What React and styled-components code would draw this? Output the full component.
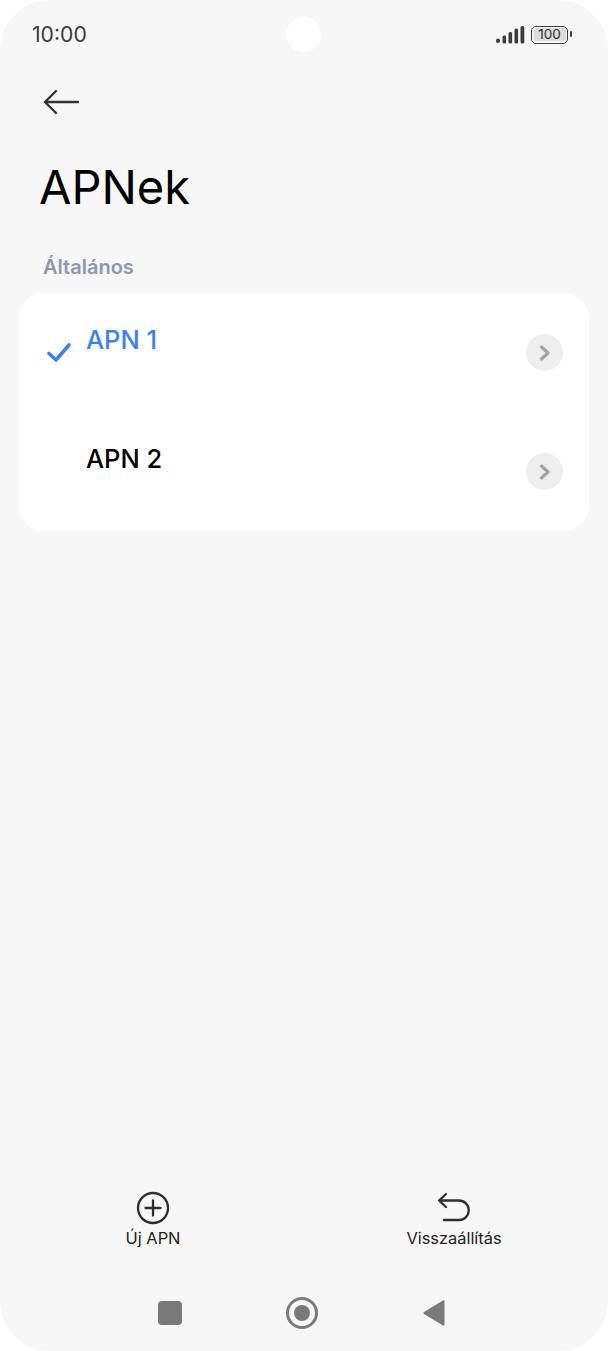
import React from 'react'
import styled, { createGlobalStyle } from 'styled-components'

const GlobalStyle = createGlobalStyle`
  html, body {
    margin: 0;
    background: #fff;
  }
  * {
    box-sizing: border-box;
  }
`

const Screen = styled.div`
  position: relative;
  width: 608px;
  height: 1351px;
  background: #f7f7f7;
  border-radius: 50px;
  overflow: hidden;
  display: flex;
  flex-direction: column;
  font-family: Inter, Roboto, 'Liberation Sans', sans-serif;
`

const StatusBar = styled.div`
  height: 68px;
  padding: 1px 37px 0 32px;
  display: flex;
  align-items: center;
  justify-content: space-between;
  color: #3c3c3c;
`

const Time = styled.span`
  font-size: 21.2px;
  line-height: 23px;
`

const Camera = styled.div`
  position: absolute;
  top: 17px;
  left: 286px;
  width: 35px;
  height: 35px;
  border-radius: 50%;
  background: #fff;
`

const StatusIcons = styled.div`
  display: flex;
  align-items: center;
  gap: 5px;
`

const Battery = styled.div`
  position: relative;
  width: 37px;
  height: 18px;
  border: 1.5px solid #3c3c3c;
  border-radius: 5px;
  padding: 1.5px;
  margin-right: 3px;
  &::after {
    content: '';
    position: absolute;
    right: -5px;
    top: 4.5px;
    width: 2px;
    height: 6px;
    border-radius: 1px;
    background: #3c3c3c;
  }
`

const BatteryLevel = styled.div`
  height: 100%;
  background: #dcdcdc;
  border-radius: 2px;
  font-size: 13.5px;
  line-height: 12px;
  text-align: center;
  color: #2c2c2c;
`

const BackButton = styled.div`
  height: 53px;
  padding: 21px 0 0 43px;
  display: flex;
`

const Title = styled.h1`
  margin: 37px 0 0 39px;
  font-size: 47px;
  font-weight: 400;
  line-height: 58px;
  color: #000;
`

const SectionLabel = styled.div`
  margin: 39px 0 0 43px;
  font-size: 20px;
  font-weight: 600;
  line-height: 24px;
  color: #9094b0;
`

const Card = styled.div`
  margin: 14px 19px 0 18px;
  height: 238px;
  background: #fff;
  border-radius: 26px;
  display: flex;
  flex-direction: column;
`

const Row = styled.div`
  height: 119px;
  padding: 31px 26px 0 29px;
  display: flex;
  align-items: flex-start;
`

const CheckSlot = styled.div`
  width: 39px;
  height: 40px;
  padding-top: 19px;
  flex: none;
`

const RowLabel = styled.div`
  flex: 1;
  font-size: 25.5px;
  font-weight: 500;
  line-height: 31px;
  color: ${props => (props.$active ? '#3b82ee' : '#000')};
`

const Chevron = styled.div`
  width: 37px;
  height: 37px;
  margin-top: 10px;
  border-radius: 50%;
  background: #eeeeee;
  display: flex;
  align-items: center;
  justify-content: center;
`

const Spacer = styled.div`
  flex: 1;
`

const Actions = styled.div`
  height: 64px;
  display: grid;
  grid-template-columns: 306px 296px;
`

const Action = styled.div`
  display: flex;
  flex-direction: column;
  align-items: center;
  color: #222;
`

const ActionLabel = styled.span`
  margin-top: 3px;
  font-size: 16.4px;
  line-height: 20px;
`

const NavBar = styled.div`
  height: 96px;
  padding: 46px 0 0 158px;
  display: flex;
  align-items: flex-start;
`

const NavSquare = styled.div`
  width: 24px;
  height: 24px;
  border-radius: 4px;
  background: #7a7a7a;
  margin-right: 104px;
  flex: none;
`

const NavHome = styled.div`
  width: 32px;
  height: 32px;
  margin-top: -4px;
  margin-right: 104px;
  border-radius: 50%;
  border: 3px solid #7a7a7a;
  display: flex;
  align-items: center;
  justify-content: center;
  flex: none;
  &::after {
    content: '';
    width: 16px;
    height: 16px;
    border-radius: 50%;
    background: #7a7a7a;
  }
`

const NavBack = styled.svg`
  margin-top: -2px;
  fill: #7a7a7a;
`

const BackArrow = () => (
  <svg width="36" height="26" viewBox="0 0 36 26" fill="none" stroke="#333" strokeWidth="2.4" strokeLinecap="round" strokeLinejoin="round">
    <path d="M35 13H2M13 2 2 13l11 11" />
  </svg>
)

const Signal = () => (
  <svg width="30" height="18" viewBox="0 0 30 18" fill="#3c3c3c">
    <rect x="0" y="12.5" width="4" height="4.500" rx="2" />
    <rect x="6.5" y="9.5" width="3.6" height="8" rx="1.5" />
    <rect x="12.5" y="6" width="3.6" height="11.5" rx="1.5" />
    <rect x="18.5" y="2.500" width="3.6" height="15" rx="1.5" />
    <rect x="24.500" y="0" width="3.8" height="17.5" rx="1.5" />
  </svg>
)

const Check = () => (
  <svg width="24" height="19" viewBox="0 0 24 19" fill="none" stroke="#3b82ee" strokeWidth="3.6" strokeLinecap="round" strokeLinejoin="round">
    <path d="M2 10.5 9 17 22 2" />
  </svg>
)

const ChevronGlyph = () => (
  <svg width="12" height="16" viewBox="0 0 12 16" fill="none" stroke="#a3a3a3" strokeWidth="3.2" strokeLinecap="round" strokeLinejoin="round">
    <path d="M2.500 2l6.500 6-6.500 6" />
  </svg>
)

const PlusCircle = () => (
  <svg width="34" height="34" viewBox="0 0 34 34" fill="none" stroke="#2e2e2e" strokeWidth="2.3" strokeLinecap="round">
    <circle cx="17" cy="17" r="15" />
    <path d="M17 9.5v15M9.5 17h15" />
  </svg>
)

const Undo = () => (
  <svg width="34" height="34" viewBox="0 0 34 34" fill="none" stroke="#2e2e2e" strokeWidth="2.3" strokeLinecap="round" strokeLinejoin="round">
    <path d="M9 3 2 9.5l7 6.5M2.500 9.500H22a9.750 9.750 0 0 1 0 19.500H7" />
  </svg>
)

const App = () => (
  <Screen>
    <GlobalStyle />
    <StatusBar>
      <Time>10:00</Time>
      <StatusIcons>
        <Signal />
        <Battery>
          <BatteryLevel>100</BatteryLevel>
        </Battery>
      </StatusIcons>
    </StatusBar>
    <Camera />
    <BackButton>
      <BackArrow />
    </BackButton>
    <Title>APNek</Title>
    <SectionLabel>Általános</SectionLabel>
    <Card>
      <Row>
        <CheckSlot>
          <Check />
        </CheckSlot>
        <RowLabel $active>APN 1</RowLabel>
        <Chevron>
          <ChevronGlyph />
        </Chevron>
      </Row>
      <Row>
        <CheckSlot />
        <RowLabel>APN 2</RowLabel>
        <Chevron>
          <ChevronGlyph />
        </Chevron>
      </Row>
    </Card>
    <Spacer />
    <Actions>
      <Action>
        <PlusCircle />
        <ActionLabel>Új APN</ActionLabel>
      </Action>
      <Action>
        <Undo />
        <ActionLabel>Visszaállítás</ActionLabel>
      </Action>
    </Actions>
    <NavBar>
      <NavSquare />
      <NavHome />
      <NavBack width="24" height="28" viewBox="0 0 24 28">
        <path d="M21 1.5c.8-.5 1.5 0 1.5 1v23c0 1-.7 1.5-1.5 1L2 15c-.8-.5-.8-1.500 0-2z" />
      </NavBack>
    </NavBar>
  </Screen>
)

export default App
